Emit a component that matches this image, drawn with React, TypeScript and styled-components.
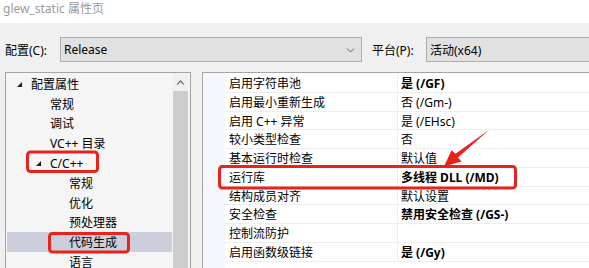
import styled, { createGlobalStyle } from "styled-components";

interface TreeItem {
  label: string;
  level: number;
  expanded?: boolean;
  selected?: boolean;
}

interface Prop {
  name: string;
  value: string;
  bold?: boolean;
}

const treeItems: TreeItem[] = [
  { label: "配置属性", level: 0, expanded: true },
  { label: "常规", level: 1 },
  { label: "调试", level: 1 },
  { label: "VC++ 目录", level: 1 },
  { label: "C/C++", level: 1, expanded: true },
  { label: "常规", level: 2 },
  { label: "优化", level: 2 },
  { label: "预处理器", level: 2 },
  { label: "代码生成", level: 2, selected: true },
  { label: "语言", level: 2 },
];

const props: Prop[] = [
  { name: "启用字符串池", value: "是 (/GF)", bold: true },
  { name: "启用最小重新生成", value: "否 (/Gm-)" },
  { name: "启用 C++ 异常", value: "是 (/EHsc)" },
  { name: "较小类型检查", value: "否" },
  { name: "基本运行时检查", value: "默认值" },
  { name: "运行库", value: "多线程 DLL (/MD)", bold: true },
  { name: "结构成员对齐", value: "默认设置" },
  { name: "安全检查", value: "禁用安全检查 (/GS-)", bold: true },
  { name: "控制流防护", value: "" },
  { name: "启用函数级链接", value: "是 (/Gy)", bold: true },
];

export default function App() {
  return (
    <Page>
      <GlobalStyle />
      <TitleBar>glew_static 属性页</TitleBar>

      <ConfigBar>
        <FieldLabel>配置(C):</FieldLabel>
        <Combo $width={302}>
          Release
          <Chevron width="9" height="6" viewBox="0 0 9 6">
            <path d="M1 1.5 L4.5 5 L8 1.5" fill="none" stroke="#606060" strokeWidth="1" />
          </Chevron>
        </Combo>
        <FieldLabel $gap>平台(P):</FieldLabel>
        <Combo $width={200}>活动(x64)</Combo>
      </ConfigBar>

      <Panels>
        <TreePanel>
          <TreeList>
            {treeItems.map((item, i) => (
              <TreeRow key={i} $level={item.level} $selected={item.selected}>
                <Expander>{item.expanded && <Triangle />}</Expander>
                {item.label}
              </TreeRow>
            ))}
          </TreeList>
          <ScrollBar>
            <ScrollUp>
              <svg width="9" height="6" viewBox="0 0 9 6">
                <path d="M0.5 5.5 L4.5 1 L8.5 5.5 L7 5.5 L4.5 2.8 L2 5.5 Z" fill="#606060" />
              </svg>
            </ScrollUp>
            <ScrollThumb />
          </ScrollBar>
        </TreePanel>

        <GridPanel>
          <Gutter />
          <Rows>
            {props.map((p, i) => (
              <GridRow key={i}>
                <NameCell>{p.name}</NameCell>
                <ValueCell $bold={p.bold}>{p.value}</ValueCell>
              </GridRow>
            ))}
          </Rows>
        </GridPanel>
      </Panels>

      <Annotations width="589" height="268" viewBox="0 0 589 268">
        <rect x="27.5" y="152" width="70" height="19.5" rx="3" />
        <rect x="49.5" y="233.5" width="79" height="18.5" rx="3" />
        <rect x="219.5" y="166.5" width="296" height="21.5" rx="3" />
        <path
          className="arrow"
          d="M489.5 129.5 L455.5 153.8 L451.5 150.2 L444 166.5 L461.5 161.5 L458 157.5 Z"
        />
      </Annotations>
    </Page>
  );
}

const GlobalStyle = createGlobalStyle`
  html, body {
    margin: 0;
    padding: 0;
    width: 589px;
    height: 268px;
    overflow: hidden;
    background: #f0f0f0;
  }
  body {
    font-family: "Noto Sans", "Noto Sans CJK SC", sans-serif;
    font-size: 12px;
    color: #000;
  }
`;

const Page = styled.div`
  position: relative;
  width: 589px;
  height: 268px;
  overflow: hidden;
  display: flex;
  flex-direction: column;
  background: #f0f0f0;
`;

const TitleBar = styled.div`
  height: 23px;
  flex-shrink: 0;
  background: #fff;
  color: #9a9a9a;
  padding-left: 3px;
  line-height: 17px;
  white-space: nowrap;
`;

const ConfigBar = styled.div`
  flex-shrink: 0;
  display: flex;
  align-items: center;
  padding: 14px 0 10px 5px;
  white-space: nowrap;
`;

const FieldLabel = styled.span<{ $gap?: boolean }>`
  width: ${p => (p.$gap ? 54 : 55)}px;
  margin-left: ${p => (p.$gap ? 10 : 0)}px;
  flex-shrink: 0;
`;

const Combo = styled.div<{ $width: number }>`
  position: relative;
  width: ${p => p.$width}px;
  height: 25px;
  flex-shrink: 0;
  box-sizing: border-box;
  border: 1px solid #adadad;
  background: #e1e1e1;
  display: flex;
  align-items: center;
  padding-left: 3px;
`;

const Chevron = styled.svg`
  position: absolute;
  right: 6px;
  top: 9px;
`;

const Panels = styled.div`
  flex: 1;
  display: flex;
  padding-left: 5px;
  gap: 11px;
  min-height: 0;
`;

const TreePanel = styled.div`
  width: 186px;
  flex-shrink: 0;
  height: 220px;
  box-sizing: border-box;
  border: 1px solid #a5a5a5;
  background: #f5f5f5;
  display: flex;
  padding-right: 2px;
`;

const TreeList = styled.div`
  flex: 1;
  padding: 1px 1px 0 1px;
  overflow: hidden;
`;

const TreeRow = styled.div<{ $level: number; $selected?: boolean }>`
  height: 19.8px;
  display: flex;
  align-items: center;
  padding-left: ${p => 10 + p.$level * 19}px;
  background: ${p => (p.$selected ? "#cccedb" : "transparent")};
  white-space: nowrap;
`;

const Expander = styled.span`
  width: 14px;
  flex-shrink: 0;
  display: flex;
  align-items: center;
`;

const Triangle = styled.span`
  width: 0;
  height: 0;
  border-left: 5px solid transparent;
  border-bottom: 5px solid #1e1e1e;
  margin-top: 1px;
`;

const ScrollBar = styled.div`
  width: 15px;
  flex-shrink: 0;
  display: flex;
  flex-direction: column;
  background: #f0f0f0;
`;

const ScrollUp = styled.div`
  height: 18px;
  display: flex;
  align-items: center;
  justify-content: center;
`;

const ScrollThumb = styled.div`
  flex: 1;
  background: #cdcdcd;
`;

const GridPanel = styled.div`
  flex: 1;
  margin-right: -20px;
  height: 220px;
  box-sizing: border-box;
  border: 1px solid #a5a5a5;
  background: #fff;
  display: flex;
`;

const Gutter = styled.div`
  width: 22px;
  flex-shrink: 0;
  background: #f4f7fc;
`;

const Rows = styled.div`
  flex: 1;
  padding-top: 1px;
`;

const GridRow = styled.div`
  height: 18.75px;
  box-sizing: border-box;
  display: grid;
  grid-template-columns: 172px 1fr;
  border-bottom: 1px solid #ededf2;
  white-space: nowrap;
`;

const NameCell = styled.div`
  display: flex;
  align-items: center;
  padding-left: 4px;
`;

const ValueCell = styled.div<{ $bold?: boolean }>`
  display: flex;
  align-items: center;
  padding-left: 3px;
  border-left: 1px solid #ededf2;
  font-weight: ${p => (p.$bold ? 700 : 400)};
`;

const Annotations = styled.svg`
  position: absolute;
  top: 0;
  left: 0;
  pointer-events: none;

  rect {
    fill: none;
    stroke: #e8231d;
    stroke-width: 3;
  }

  .arrow {
    fill: #e8231d;
  }
`;
